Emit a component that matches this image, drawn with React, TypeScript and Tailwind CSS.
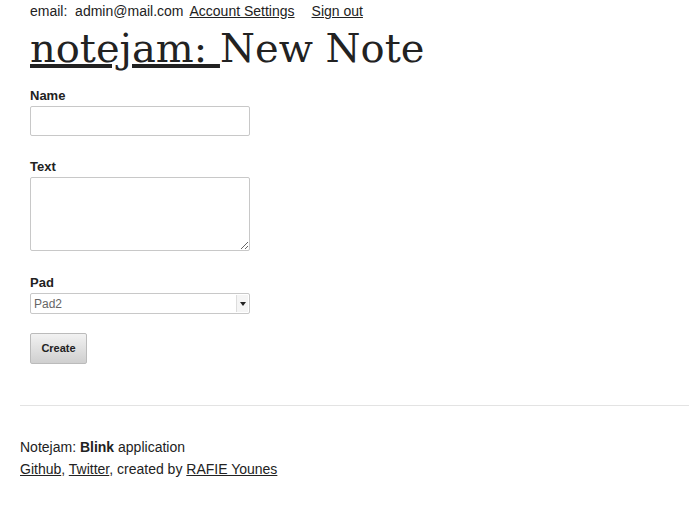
import React from "react";

export default function App() {
  return (
    <div className="w-[689px] h-[508px] bg-white text-[#222] overflow-hidden" style={{ fontFamily: '"Liberation Sans", Arial, sans-serif' }}>
      <div className="pl-[30px] pt-[3px] text-[14px] leading-[17px] flex">
        <span>email:&nbsp; admin@mail.com</span>
        <a className="underline ml-[6px]" href="#">Account Settings</a>
        <a className="underline ml-[17px]" href="#">Sign out</a>
      </div>
      <h1 className="pl-[30px] mt-[4px] text-[40px] leading-[48px] text-[#222]" style={{ fontFamily: '"DejaVu Serif", Georgia, serif' }}>
        <a className="underline" href="#">notejam: </a>New Note
      </h1>
      <form className="pl-[30px] mt-[16px] flex flex-col">
        <label className="text-[13px] font-bold leading-[16px]">Name</label>
        <input className="mt-[2px] w-[220px] h-[30px] border border-[#c8c8c8] rounded-[2px]" />
        <label className="mt-[23px] text-[13px] font-bold leading-[16px]">Text</label>
        <textarea className="mt-[2px] w-[220px] h-[74px] border border-[#c8c8c8] rounded-[2px]" />
        <label className="mt-[24px] text-[13px] font-bold leading-[16px]">Pad</label>
        <div className="relative mt-[2px] w-[220px] h-[21px] border border-[#c8c8c8] rounded-[2px] flex items-center text-[12px] text-[#666] pl-[3px]">
          <span>Pad2</span>
          <div className="absolute right-[1px] top-[1px] bottom-[1px] w-[12px] flex items-center justify-center border-l border-[#ddd] bg-[#f5f5f5]">
            <span className="block w-0 h-0 border-l-[3px] border-r-[3px] border-t-[4px] border-l-transparent border-r-transparent border-t-[#222]" />
          </div>
        </div>
        <button type="button" className="mt-[19px] w-[57px] h-[31px] border border-[#bbb] rounded-[2px] text-[11px] font-bold text-[#222] bg-gradient-to-b from-[#f2f2f2] to-[#cfcfcf]">
          Create
        </button>
      </form>
      <div className="ml-[20px] mt-[41px] border-t border-[#e3e3e3]" />
      <div className="pl-[20px] mt-[30px] text-[14px] leading-[22px] text-[#222]">
        <div>Notejam: <b>Blink</b> application</div>
        <div>
          <a className="underline" href="#">Github</a>, <a className="underline" href="#">Twitter</a>, created by <a className="underline" href="#">RAFIE Younes</a>
        </div>
      </div>
    </div>
  );
}
